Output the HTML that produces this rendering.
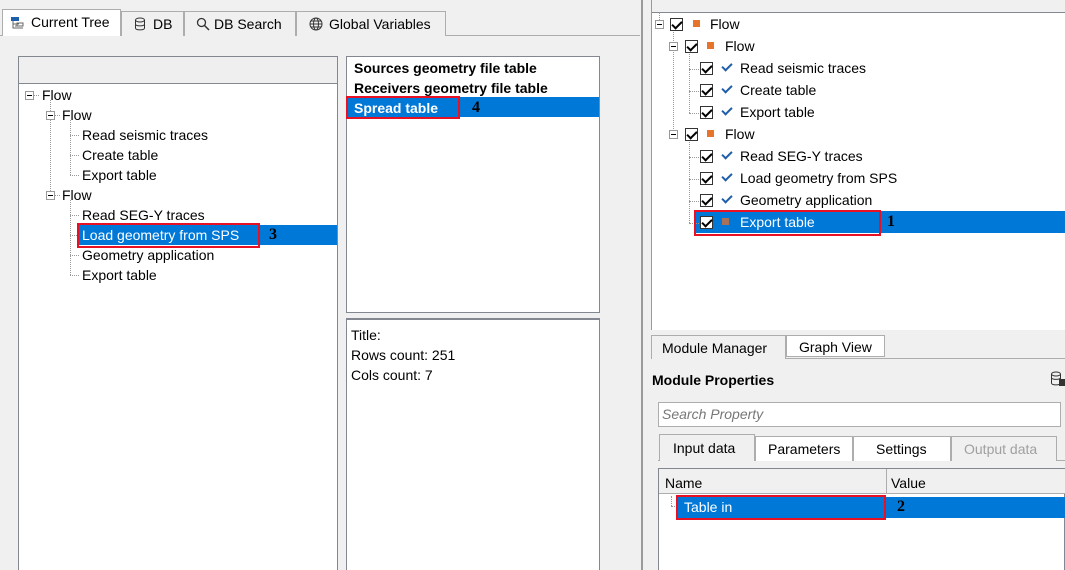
<!DOCTYPE html>
<html><head><meta charset="utf-8"><style>
*{box-sizing:border-box;margin:0;padding:0}
html,body{width:1065px;height:570px;overflow:hidden}
body{background:#f0f0f0;font-family:"Liberation Sans",sans-serif;font-size:14px;color:#000;position:relative}
.a{position:absolute;white-space:nowrap}
.tab{position:absolute;top:11px;height:25px;border:1px solid #adadad;border-bottom:none;background:#f0f0f0;padding:4px 8px;font-size:14px}
.red{position:absolute;border:2px solid #e81123}
.num{position:absolute;font-family:"Liberation Serif",serif;font-weight:bold;font-size:16px}
.cb{position:absolute;width:13px;height:13px;border:1px solid #333;background:#fff}
.cb:after{content:"";position:absolute;left:3px;top:0px;width:4px;height:8px;border:solid #000;border-width:0 2px 2px 0;transform:rotate(45deg)}
.chk{position:absolute;width:6px;height:10px;border:solid #1f5ea8;border-width:0 2px 2px 0;transform:rotate(45deg)}
.sq{position:absolute;width:7px;height:7px;background:#e8732a}
.pm{position:absolute;width:9px;height:9px;border:1px solid #999;background:#fff}
.pm:after{content:"";position:absolute;left:1px;top:3px;width:5px;height:1px;background:#000}
.dv{position:absolute;border-left:1px dotted #999}
.dh{position:absolute;border-top:1px dotted #999}
</style></head><body>
<div class="a" style="left:0;top:35px;width:640px;height:1px;background:#adadad"></div>
<div class="tab" style="left:2px;top:9px;height:27px;width:119px;background:#fff;border-color:#adadad">
<svg width="14" height="14" style="position:absolute;left:7px;top:6px"><rect x="1" y="1" width="8" height="4" fill="#1f5ea8"/><path d="M3 5v7h10M3 8h6M5 10h8" stroke="#666" fill="none"/><rect x="7" y="7" width="6" height="3" fill="none" stroke="#666"/></svg>
<span style="margin-left:20px">Current Tree</span></div>
<div class="tab" style="left:121px;width:63px"><svg width="12" height="14" style="position:absolute;left:12px;top:5px"><ellipse cx="6" cy="3" rx="4.5" ry="2" fill="none" stroke="#333"/><path d="M1.5 3v8c0 2.5 9 2.5 9 0V3M1.5 7c0 2.5 9 2.5 9 0" fill="none" stroke="#333"/></svg><span style="margin-left:23px">DB</span></div>
<div class="tab" style="left:184px;width:112px"><svg width="14" height="14" style="position:absolute;left:11px;top:5px"><circle cx="5.5" cy="5.5" r="4" fill="none" stroke="#333" stroke-width="1.3"/><path d="M8.5 8.5l4.5 4.5" stroke="#333" stroke-width="1.5"/></svg><span style="margin-left:21px">DB Search</span></div>
<div class="tab" style="left:296px;width:150px"><svg width="14" height="14" style="position:absolute;left:12px;top:5px"><circle cx="7" cy="7" r="6" fill="none" stroke="#333"/><ellipse cx="7" cy="7" rx="2.5" ry="6" fill="none" stroke="#333"/><path d="M1 7h12M2 4h10M2 10h10" stroke="#333" fill="none"/></svg><span style="margin-left:24px">Global Variables</span></div>

<div class="a" style="left:18px;top:56px;width:320px;height:520px;background:#fff;border:1px solid #828790"></div>
<div class="a" style="left:19px;top:57px;width:318px;height:27px;background:#efefef;border-bottom:1px solid #828790"></div>
<div class="pm" style="left:25px;top:91px"></div><div class="dh" style="left:34px;top:95px;width:5px"></div>
<div class="a" style="left:42px;top:87px">Flow</div>
<div class="dv" style="left:50px;top:100px;height:95px"></div>
<div class="pm" style="left:46px;top:111px"></div><div class="dh" style="left:55px;top:115px;width:5px"></div>
<div class="a" style="left:62px;top:107px">Flow</div>
<div class="dv" style="left:70px;top:120px;height:55px"></div>
<div class="dh" style="left:70px;top:135px;width:9px"></div><div class="a" style="left:82px;top:127px">Read seismic traces</div>
<div class="dh" style="left:70px;top:155px;width:9px"></div><div class="a" style="left:82px;top:147px">Create table</div>
<div class="dh" style="left:70px;top:175px;width:9px"></div><div class="a" style="left:82px;top:167px">Export table</div>
<div class="pm" style="left:46px;top:191px"></div><div class="dh" style="left:55px;top:195px;width:5px"></div>
<div class="a" style="left:62px;top:187px">Flow</div>
<div class="dv" style="left:70px;top:200px;height:75px"></div>
<div class="dh" style="left:70px;top:215px;width:9px"></div><div class="a" style="left:82px;top:207px">Read SEG-Y traces</div>
<div class="a" style="left:79px;top:225px;width:258px;height:20px;background:#0078d7"></div>
<div class="dh" style="left:70px;top:235px;width:9px"></div><div class="a" style="left:82px;top:227px;color:#fff">Load geometry from SPS</div>
<div class="red" style="left:77px;top:223px;width:183px;height:25px"></div>
<div class="num" style="left:269px;top:226px">3</div>
<div class="dh" style="left:70px;top:255px;width:9px"></div><div class="a" style="left:82px;top:247px">Geometry application</div>
<div class="dh" style="left:70px;top:275px;width:9px"></div><div class="a" style="left:82px;top:267px">Export table</div>

<div class="a" style="left:346px;top:56px;width:254px;height:257px;background:#fff;border:1px solid #828790"></div>
<div class="a" style="left:354px;top:60px;font-weight:bold">Sources geometry file table</div>
<div class="a" style="left:354px;top:80px;font-weight:bold">Receivers geometry file table</div>
<div class="a" style="left:347px;top:97px;width:252px;height:20px;background:#0078d7"></div>
<div class="a" style="left:354px;top:100px;font-weight:bold;color:#fff">Spread table</div>
<div class="red" style="left:346px;top:96px;width:114px;height:23px"></div>
<div class="num" style="left:472px;top:99px">4</div>
<div class="a" style="left:346px;top:318px;width:254px;height:260px;background:#fff;border:1px solid #828790;border-top:2px solid #828790"></div>
<div class="a" style="left:351px;top:327px">Title:</div>
<div class="a" style="left:351px;top:347px">Rows count: 251</div>
<div class="a" style="left:351px;top:367px">Cols count: 7</div>

<div class="a" style="left:641px;top:0;width:2px;height:570px;background:#9a9a9a"></div>
<div class="a" style="left:651px;top:0;width:1px;height:330px;background:#9a9a9a"></div>

<div class="a" style="left:652px;top:12px;width:413px;height:318px;background:#fff;border-top:1px solid #828790"></div>
<div class="dv" style="left:659px;top:12px;height:8px"></div>
<div class="pm" style="left:655px;top:20px"></div>
<div class="cb" style="left:670px;top:18px"></div><div class="sq" style="left:693px;top:20px"></div>
<div class="a" style="left:710px;top:16px">Flow</div>
<div class="dv" style="left:673px;top:32px;height:103px"></div>
<div class="pm" style="left:669px;top:42px"></div>
<div class="cb" style="left:685px;top:40px"></div><div class="sq" style="left:707px;top:42px"></div>
<div class="a" style="left:725px;top:38px">Flow</div>
<div class="dv" style="left:689px;top:54px;height:59px"></div>
<div class="dh" style="left:689px;top:69px;width:10px"></div><div class="cb" style="left:700px;top:62px"></div><div class="chk" style="left:724px;top:61px"></div><div class="a" style="left:740px;top:60px">Read seismic traces</div>
<div class="dh" style="left:689px;top:91px;width:10px"></div><div class="cb" style="left:700px;top:84px"></div><div class="chk" style="left:724px;top:83px"></div><div class="a" style="left:740px;top:82px">Create table</div>
<div class="dh" style="left:689px;top:113px;width:10px"></div><div class="cb" style="left:700px;top:106px"></div><div class="chk" style="left:724px;top:105px"></div><div class="a" style="left:740px;top:104px">Export table</div>
<div class="pm" style="left:669px;top:130px"></div>
<div class="cb" style="left:685px;top:128px"></div><div class="sq" style="left:707px;top:130px"></div>
<div class="a" style="left:725px;top:126px">Flow</div>
<div class="dv" style="left:689px;top:142px;height:81px"></div>
<div class="dh" style="left:689px;top:157px;width:10px"></div><div class="cb" style="left:700px;top:150px"></div><div class="chk" style="left:724px;top:149px"></div><div class="a" style="left:740px;top:148px">Read SEG-Y traces</div>
<div class="dh" style="left:689px;top:179px;width:10px"></div><div class="cb" style="left:700px;top:172px"></div><div class="chk" style="left:724px;top:171px"></div><div class="a" style="left:740px;top:170px">Load geometry from SPS</div>
<div class="dh" style="left:689px;top:201px;width:10px"></div><div class="cb" style="left:700px;top:194px"></div><div class="chk" style="left:724px;top:193px"></div><div class="a" style="left:740px;top:192px">Geometry application</div>
<div class="a" style="left:696px;top:211px;width:369px;height:22px;background:#0078d7"></div>
<div class="dh" style="left:689px;top:223px;width:10px"></div><div class="cb" style="left:700px;top:216px"></div><div class="sq" style="left:722px;top:218px;background:#a8715c"></div>
<div class="a" style="left:740px;top:214px;color:#fff">Export table</div>
<div class="red" style="left:694px;top:210px;width:187px;height:26px"></div>
<div class="num" style="left:887px;top:213px">1</div>

<div class="a" style="left:652px;top:358px;width:413px;height:1px;background:#adadad"></div>
<div class="tab" style="left:651px;top:335px;height:24px;width:135px;padding:4px 10px">Module Manager</div>
<div class="tab" style="left:786px;top:335px;height:22px;width:99px;background:#fff;padding:3px 12px;border-bottom:1px solid #adadad">Graph View</div>
<div class="a" style="left:652px;top:372px;font-weight:bold">Module Properties</div>
<svg class="a" style="left:1050px;top:371px" width="15" height="16"><ellipse cx="6" cy="3" rx="4.5" ry="2" fill="none" stroke="#333"/><path d="M1.5 3v9c0 2.5 9 2.5 9 0V3M1.5 6.5c0 2.5 9 2.5 9 0" fill="none" stroke="#333"/><rect x="9" y="8" width="6" height="7" fill="#333"/></svg>
<div class="a" style="left:658px;top:402px;width:403px;height:25px;background:#fff;border:1px solid #adadad"></div>
<div class="a" style="left:662px;top:406px;font-style:italic;color:#777">Search Property</div>
<div class="a" style="left:658px;top:460px;width:407px;height:1px;background:#adadad"></div>
<div class="tab" style="left:659px;top:434px;width:96px;height:27px;padding:5px 13px">Input data</div>
<div class="tab" style="left:755px;top:436px;width:98px;background:#fff;padding:4px 12px">Parameters</div>
<div class="tab" style="left:853px;top:436px;width:98px;background:#fff;padding:4px 22px">Settings</div>
<div class="tab" style="left:951px;top:436px;width:106px;padding:4px 12px;color:#a0a0a0">Output data</div>
<div class="a" style="left:658px;top:468px;width:407px;height:110px;background:#fff;border:1px solid #828790"></div>
<div class="a" style="left:659px;top:469px;width:406px;height:25px;background:#f0f0f0;border-bottom:1px solid #adadad"></div>
<div class="a" style="left:886px;top:469px;width:1px;height:25px;background:#adadad"></div>
<div class="a" style="left:665px;top:475px">Name</div>
<div class="a" style="left:891px;top:475px">Value</div>
<div class="dv" style="left:671px;top:496px;height:10px"></div><div class="dh" style="left:671px;top:506px;width:6px"></div>
<div class="a" style="left:678px;top:497px;width:387px;height:21px;background:#0078d7"></div>
<div class="a" style="left:684px;top:499px;color:#fff">Table in</div>
<div class="red" style="left:676px;top:495px;width:210px;height:25px"></div>
<div class="num" style="left:897px;top:498px">2</div>
</body></html>
